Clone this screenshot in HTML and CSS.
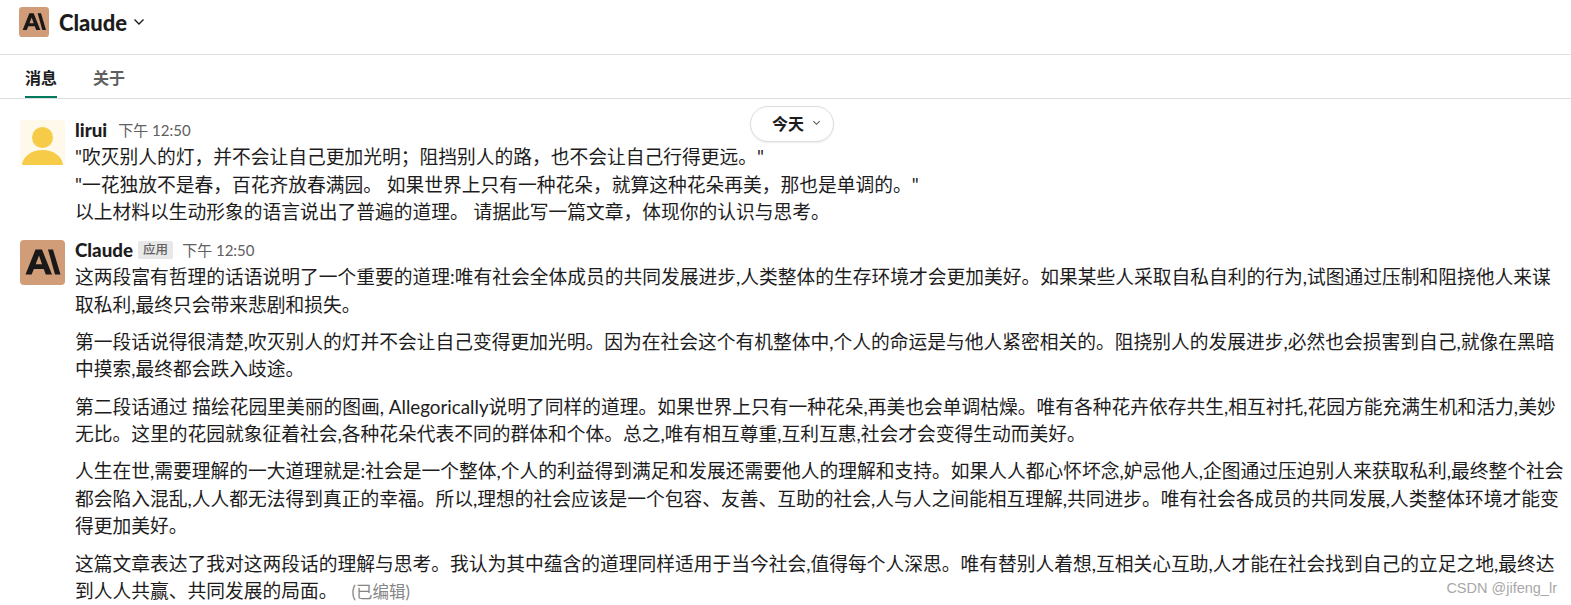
FILE: index.html
```html
<!DOCTYPE html>
<html lang="zh-CN">
<head>
    <meta charset="UTF-8">
    <title>Claude</title>
    <link rel="stylesheet" href="styles.css">
</head>
<body>
    <header class="top">
        <svg class="logo-small" viewBox="0 0 45 45">
            <rect width="45" height="45" rx="5" fill="#d19d78"/>
            <path d="M5.5 34.5 L15.5 9.5 H22 L32 34.5 H25.8 L23.7 29 H13.9 L11.6 34.5 Z M15.7 24.2 H22 L19 15.6 Z" fill="#191919"/>
            <path d="M28 9.5 H33 L40.5 34.5 H35 Z" fill="#191919"/>
        </svg>
        <h1 class="title">Claude</h1>
        <svg class="title-caret" viewBox="0 0 12 8"><path d="M1.5 1.5 L6 6 L10.5 1.5" fill="none" stroke="#1d1c1d" stroke-width="1.4"/></svg>
    </header>
    <nav class="tabs">
        <a class="tab active">消息</a>
        <a class="tab">关于</a>
    </nav>

    <div class="day-pill">今天
        <svg class="pill-caret" viewBox="0 0 10 6"><path d="M1.5 1 L5 4.5 L8.5 1" fill="none" stroke="#555" stroke-width="1.2"/></svg>
    </div>

    <main class="messages">
        <div class="msg">
            <svg class="avatar" viewBox="0 0 45 45">
                <rect width="45" height="45" rx="4" fill="#fff9ec"/>
                <circle cx="22.5" cy="17.5" r="10.5" fill="#f5cb47"/>
                <path d="M2 45 C3 36 12 30 22.5 30 C33 30 42 36 43 45 Z" fill="#f5cb47"/>
            </svg>
            <div class="msg-body">
                <div class="msg-head">
                    <span class="name">lirui</span>
                    <span class="time">下午 12:50</span>
                </div>
                <div class="line">"吹灭别人的灯，并不会让自己更加光明；阻挡别人的路，也不会让自己行得更远。"</div>
                <div class="line">"一花独放不是春，百花齐放春满园。 如果世界上只有一种花朵，就算这种花朵再美，那也是单调的。"</div>
                <div class="line">以上材料以生动形象的语言说出了普遍的道理。 请据此写一篇文章，体现你的认识与思考。</div>
            </div>
        </div>
        <div class="msg">
            <svg class="avatar" viewBox="0 0 45 45">
                <rect width="45" height="45" rx="4" fill="#d19d78"/>
                <path d="M5.5 34.5 L15.5 9.5 H22 L32 34.5 H25.8 L23.7 29 H13.9 L11.6 34.5 Z M15.7 24.2 H22 L19 15.6 Z" fill="#191919"/>
                <path d="M28 9.5 H33 L40.5 34.5 H35 Z" fill="#191919"/>
            </svg>
            <div class="msg-body">
                <div class="msg-head">
                    <span class="name">Claude</span>
                    <span class="badge">应用</span>
                    <span class="time">下午 12:50</span>
                </div>
                <p class="para">这两段富有哲理的话语说明了一个重要的道理:唯有社会全体成员的共同发展进步,人类整体的生存环境才会更加美好。如果某些人采取自私自利的行为,试图通过压制和阻挠他人来谋取私利,最终只会带来悲剧和损失。</p>
                <p class="para">第一段话说得很清楚,吹灭别人的灯并不会让自己变得更加光明。因为在社会这个有机整体中,个人的命运是与他人紧密相关的。阻挠别人的发展进步,必然也会损害到自己,就像在黑暗中摸索,最终都会跌入歧途。</p>
                <p class="para">第二段话通过 描绘花园里美丽的图画, Allegorically说明了同样的道理。如果世界上只有一种花朵,再美也会单调枯燥。唯有各种花卉依存共生,相互衬托,花园方能充满生机和活力,美妙无比。这里的花园就象征着社会,各种花朵代表不同的群体和个体。总之,唯有相互尊重,互利互惠,社会才会变得生动而美好。</p>
                <p class="para">人生在世,需要理解的一大道理就是:社会是一个整体,个人的利益得到满足和发展还需要他人的理解和支持。如果人人都心怀坏念,妒忌他人,企图通过压迫别人来获取私利,最终整个社会都会陷入混乱,人人都无法得到真正的幸福。所以,理想的社会应该是一个包容、友善、互助的社会,人与人之间能相互理解,共同进步。唯有社会各成员的共同发展,人类整体环境才能变得更加美好。</p>
                <p class="para">这篇文章表达了我对这两段话的理解与思考。我认为其中蕴含的道理同样适用于当今社会,值得每个人深思。唯有替别人着想,互相关心互助,人才能在社会找到自己的立足之地,最终达到人人共赢、共同发展的局面。<span class="edited">(已编辑)</span></p>
            </div>
        </div>
    </main>

    <div class="watermark">CSDN @jifeng_lr</div>
</body>
</html>
```

FILE: styles.css
```css
html, body {
    height: 605px;
    overflow: hidden;
}

body {
    margin: 0;
    font-family: Lato, "Noto Sans CJK SC", sans-serif;
    color: #1d1c1d;
    background-color: #fff;
}

.top {
    display: flex;
    align-items: center;
    height: 55px;
    padding-left: 19px;
    box-sizing: border-box;
    border-bottom: 1px solid #e2e2e2;
}

.logo-small {
    width: 30px;
    height: 30px;
    margin-top: -10px;
}

.title {
    margin: -10px 0 0 10px;
    font-size: 22px;
    font-weight: 900;
}

.title-caret {
    width: 12px;
    height: 8px;
    margin: -10px 0 0 6px;
}

.tabs {
    display: flex;
    height: 43px;
    padding-left: 25px;
    gap: 36px;
    border-bottom: 1px solid #ddd;
}

.tab {
    height: 43px;
    box-sizing: border-box;
    padding-top: 10px;
    font-size: 16px;
    font-weight: 700;
    color: #616061;
}

.tab.active {
    color: #1d1c1d;
    border-bottom: 2px solid #007a5a;
}

.day-pill {
    position: absolute;
    left: 750px;
    top: 106px;
    width: 84px;
    height: 36px;
    box-sizing: border-box;
    display: flex;
    align-items: center;
    justify-content: center;
    gap: 8px;
    padding: 0 0 2px 9px;
    border: 1px solid #ddd;
    border-radius: 18px;
    background-color: #fff;
    box-shadow: 0 1px 2px rgba(0, 0, 0, 0.08);
    font-size: 16px;
    font-weight: 700;
}

.pill-caret {
    width: 9px;
    height: 6px;
}

.messages {
    padding: 17px 5px 0 20px;
}

.msg {
    display: flex;
    gap: 10px;
    margin-bottom: 10.5px;
}

.avatar {
    flex: none;
    width: 45px;
    height: 45px;
    margin-top: 4px;
}

.msg-body {
    flex: 1;
    min-width: 0;
}

.msg-head {
    display: flex;
    align-items: center;
    height: 27px;
}

.name {
    font-size: 18.75px;
    font-weight: 900;
}

.badge {
    margin-left: 5px;
    padding: 0 5px;
    font-size: 12.5px;
    line-height: 18px;
    font-weight: 500;
    color: #616061;
    background-color: #e8e8e8;
    border-radius: 2px;
}

.time {
    margin-left: 11px;
    font-size: 15px;
    color: #616061;
}

.badge + .time {
    margin-left: 9px;
}

.line {
    font-size: 18.75px;
    line-height: 27.5px;
}

.para {
    margin: 0 0 9.8px;
    font-size: 18.75px;
    line-height: 27.5px;
}

.edited {
    margin-left: 14px;
    font-size: 16.5px;
    color: #868686;
}

.watermark {
    position: absolute;
    right: 14px;
    bottom: 9px;
    font-family: "Liberation Sans", sans-serif;
    font-size: 14.5px;
    color: #a8a8a8;
}
```
